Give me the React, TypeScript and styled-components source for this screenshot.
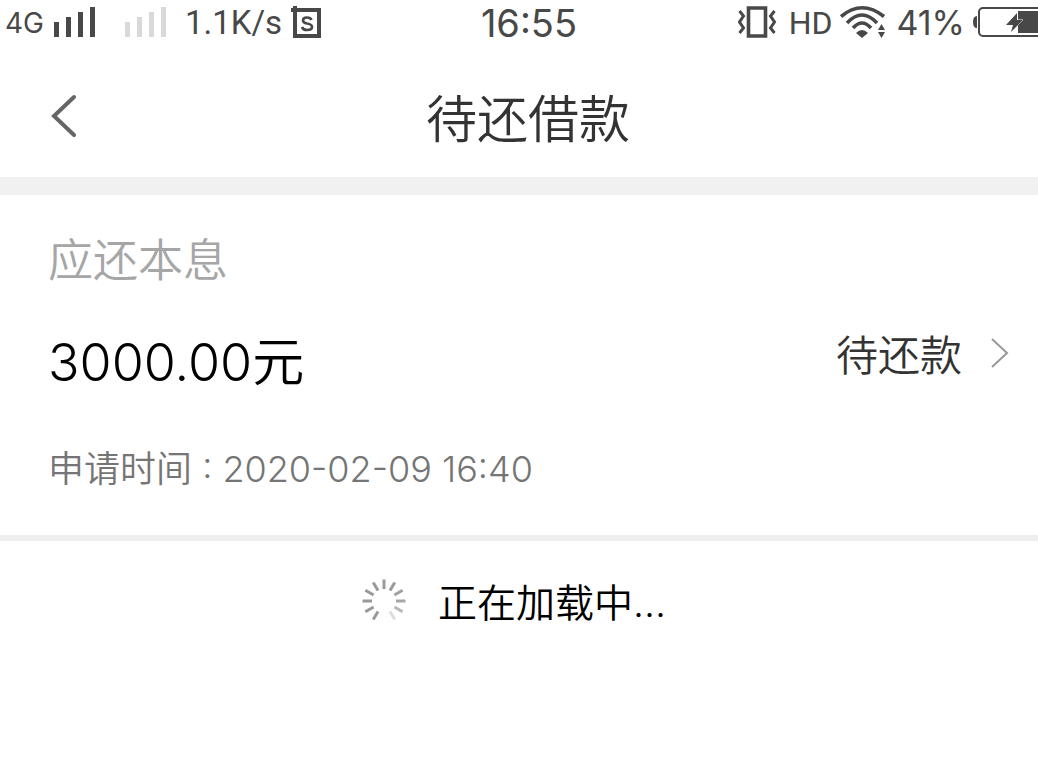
import React from "react";
import styled, { createGlobalStyle } from "styled-components";

const GlobalStyle = createGlobalStyle`
  * { box-sizing: border-box; }
  body {
    margin: 0;
    background: #fff;
    color: #000;
    font-family: Inter, "Noto Sans CJK SC", sans-serif;
    overflow-x: hidden;
  }
`;

const Page = styled.div`
  overflow: hidden;
`;

const StatusBar = styled.div`
  display: grid;
  grid-template-columns: 1fr auto 1fr;
  align-items: center;
  height: 44px;
  color: #484848;
`;

const StatusGroup = styled.div<{ $end?: boolean }>`
  display: flex;
  align-items: center;
  min-width: 0;
  white-space: nowrap;
  justify-content: ${(p) => (p.$end ? "flex-end" : "flex-start")};
  padding-left: ${(p) => (p.$end ? "0" : "5px")};

  svg { flex: none; display: block; }
`;

const StatusText = styled.span<{ $size: number; $font?: string }>`
  font-size: ${(p) => p.$size}px;
  font-family: ${(p) => p.$font ?? "inherit"};
  line-height: 44px;
`;

const Clock = styled.time`
  padding-left: 20px;
  font-size: 38px;
  line-height: 46px;
`;

const Space = styled.span<{ $w: number }>`
  flex: none;
  width: ${(p) => p.$w}px;
`;

const Header = styled.header`
  display: grid;
  grid-template-columns: 1fr auto 1fr;
  align-items: center;
  height: 151px;
  padding-top: 18px;
  border-bottom: 18px solid #f1f1f1;
`;

const BackButton = styled.button`
  justify-self: start;
  padding: 0 0 8px 48px;
  border: 0;
  background: none;
  cursor: pointer;

  svg { display: block; }
`;

const Title = styled.h1`
  margin: 0;
  padding-left: 18px;
  color: #333;
  font-size: 51px;
  font-weight: 350;
  line-height: 60px;
`;

const Loan = styled.section`
  padding: 34px 28px 40px 48px;
  border-bottom: 6px solid #eee;
`;

const Label = styled.h2`
  margin: 0;
  color: #a6a6a6;
  font-size: 45px;
  font-weight: 350;
  line-height: 64px;
`;

const AmountRow = styled.div`
  display: flex;
  align-items: center;
  justify-content: space-between;
  margin-top: 32px;
`;

const Amount = styled.strong`
  font-size: 52px;
  font-weight: 350;
  line-height: 76px;
`;

const StatusLink = styled.a`
  display: flex;
  align-items: center;
  gap: 28px;
  padding-bottom: 14px;
  color: #333;
  font-size: 42px;
  font-weight: 350;
  line-height: 60px;
  text-decoration: none;

  svg { margin-bottom: 6px; }
`;

const Applied = styled.p`
  margin: 42px 0 0;
  color: #757575;
  font-size: 36px;
  font-weight: 350;
  line-height: 52px;
`;

const Loading = styled.div`
  display: flex;
  align-items: center;
  justify-content: center;
  gap: 32px;
  padding: 32px 10px 0 0;
  font-size: 39px;
  font-weight: 350;
  line-height: 60px;

  svg { margin-bottom: 4px; }
`;

function Signal({ color, label }: { color: string; label: string }) {
  return (
    <svg width="42" height="44" viewBox="0 0 42 44" fill={color} role="img" aria-label={label}>
      <path d="M0 21h5v15H0zM12 16h5v20h-5zM24 11h5v25h-5zM36 6h5v30h-5z" />
    </svg>
  );
}

function SimBadge() {
  return (
    <svg width="31" height="44" viewBox="0 0 31 44" fill="none" stroke="#484848" aria-hidden="true">
      <path d="M4 9h24v26H4z" strokeWidth="4" />
      <path d="M0 9h6M4 5v6" strokeWidth="4" />
      <path d="M20.500 19q-1-2.500-4.500-2.500-4 0-4 3 0 2.200 4 3 5 .800 5 3.500 0 3-5 3-4 0-5-3" strokeWidth="2.600" />
    </svg>
  );
}

function Vibrate() {
  return (
    <svg width="39" height="44" viewBox="0 0 39 44" fill="none" stroke="#484848" role="img" aria-label="震动">
      <path d="M10.500 7h17v28h-17z" strokeWidth="3.600" />
      <path d="M1.500 10l4 5-4 6 4 6-4 5M36.500 10l-4 5 4 6-4 6 4 5" strokeWidth="3" />
    </svg>
  );
}

function Wifi() {
  return (
    <svg width="46" height="44" viewBox="0 0 46 44" fill="none" stroke="#484848" strokeWidth="3.600" role="img" aria-label="WLAN">
      <path d="M1 15.500Q22 -2 44 15.500M7 22Q22 6 37 22M13 27Q22 17 31 27" />
      <path d="M16 32Q22 26 28 32L22 37z" fill="#484848" stroke="none" />
      <path d="M38 29h7l-3.500-6zM38 31h7l-3.500 6z" fill="#484848" stroke="none" />
    </svg>
  );
}

function Battery() {
  return (
    <svg width="65" height="44" viewBox="0 0 65 44" role="img" aria-label="电量 41%">
      <path d="M4 15v12q-4 0-4-6t4-6z" fill="#484848" />
      <rect x="6" y="7" width="70" height="28" rx="4" fill="none" stroke="#484848" strokeWidth="2" />
      <path d="M45 10h20v22H45z" fill="#484848" />
      <path d="M44 12L33 24h7l-2 7 12-12h-6z" fill="#484848" stroke="#fff" strokeWidth="1" paintOrder="stroke" />
    </svg>
  );
}

const SPOKES = [
  [0, "#999"], [30, "#999"], [60, "#a0a0a0"], [90, "#a6a6a6"], [120, "#b8b8b8"], [150, "#dcdcdc"],
  [210, "#999"], [240, "#999"], [270, "#999"], [300, "#999"], [330, "#999"],
] as const;

function Spinner() {
  return (
    <svg width="44" height="44" viewBox="-22 -22 44 44" strokeWidth="3" aria-hidden="true">
      {SPOKES.map(([angle, color]) => (
        <path key={angle} d="M0 -12V-21.500" stroke={color} transform={`rotate(${angle})`} />
      ))}
    </svg>
  );
}

export default function App() {
  return (
    <Page>
      <GlobalStyle />
      <StatusBar>
        <StatusGroup>
          <StatusText $size={28}>4G</StatusText>
          <Space $w={10} />
          <Signal color="#484848" label="信号满格" />
          <Space $w={29} />
          <Signal color="#d9d9d9" label="无信号" />
          <Space $w={18} />
          <StatusText $size={33} $font="Roboto, sans-serif">1.1K/s</StatusText>
          <Space $w={9} />
          <SimBadge />
        </StatusGroup>
        <Clock>16:55</Clock>
        <StatusGroup $end>
          <Vibrate />
          <Space $w={12} />
          <StatusText $size={32} $font="Roboto, sans-serif">HD</StatusText>
          <Space $w={8} />
          <Wifi />
          <Space $w={10} />
          <StatusText $size={34}>41%</StatusText>
          <Space $w={8} />
          <Battery />
        </StatusGroup>
      </StatusBar>
      <Header>
        <BackButton type="button" aria-label="返回">
          <svg width="32" height="46" viewBox="0 0 32 46" fill="none" stroke="#666" strokeWidth="4" strokeLinecap="round">
            <path d="M26 4L6 23L26 42" />
          </svg>
        </BackButton>
        <Title>待还借款</Title>
      </Header>
      <main>
        <Loan>
          <Label>应还本息</Label>
          <AmountRow>
            <Amount>3000.00元</Amount>
            <StatusLink href="#repay">
              待还款
              <svg width="20" height="32" viewBox="0 0 20 32" fill="none" stroke="#999" strokeWidth="2" aria-hidden="true">
                <path d="M2 2L17 16L2 30" />
              </svg>
            </StatusLink>
          </AmountRow>
          <Applied>申请时间 : 2020-02-09 16:40</Applied>
        </Loan>
        <Loading role="status">
          <Spinner />
          正在加载中...
        </Loading>
      </main>
    </Page>
  );
}
